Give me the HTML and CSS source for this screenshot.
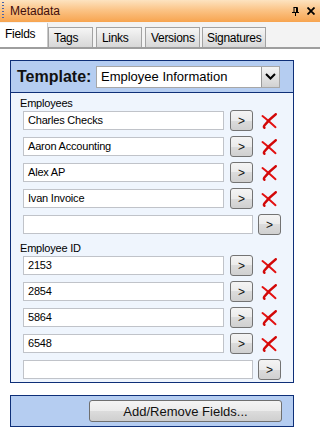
FILE: index.html
```html
<!DOCTYPE html>
<html lang="en">
<head>
    <meta charset="UTF-8">
    <meta name="viewport" content="width=device-width, initial-scale=1.0">
    <title>Metadata</title>
    <link rel="stylesheet" href="styles.css">
</head>
<body>
    <div class="titlebar">
        <span class="grip"></span>
        <span class="title">Metadata</span>
        <span class="tools">
            <svg class="pin" width="7" height="9" viewBox="0 0 7 9">
                <path d="M1.5 0.5h4M2 0.5v5M4.5 0.5v5M5.5 0.5v5M0 5.5h7M3.5 5.5v3.5" stroke="#000" stroke-width="1" fill="none"/>
            </svg>
            <svg class="close" width="8" height="8" viewBox="0 0 8 8">
                <path d="M0.5 0.5l7 7M7.5 0.5l-7 7" stroke="#000" stroke-width="1.8" fill="none"/>
            </svg>
        </span>
    </div>

    <div class="tabs">
        <div class="tab active">Fields</div>
        <div class="tab">Tags</div>
        <div class="tab">Links</div>
        <div class="tab">Versions</div>
        <div class="tab">Signatures</div>
    </div>

    <div class="panel">
        <div class="panel-head">
            <span class="template-label">Template:</span>
            <div class="combo">
                <span class="combo-text">Employee Information</span>
                <span class="combo-btn">
                    <svg width="11" height="7" viewBox="0 0 11 7">
                        <path d="M1 1l4.5 4.5L10 1" stroke="#000" stroke-width="2" fill="none"/>
                    </svg>
                </span>
            </div>
        </div>

        <div class="panel-body">
            <div class="section">
                <div class="section-label">Employees</div>
                <div class="row"><div class="field">Charles Checks</div><button class="go">&gt;</button><span class="del"></span></div>
                <div class="row"><div class="field">Aaron Accounting</div><button class="go">&gt;</button><span class="del"></span></div>
                <div class="row"><div class="field">Alex AP</div><button class="go">&gt;</button><span class="del"></span></div>
                <div class="row"><div class="field">Ivan Invoice</div><button class="go">&gt;</button><span class="del"></span></div>
                <div class="row"><div class="field wide"></div><button class="go next">&gt;</button></div>
            </div>
            <div class="section">
                <div class="section-label">Employee ID</div>
                <div class="row"><div class="field">2153</div><button class="go">&gt;</button><span class="del"></span></div>
                <div class="row"><div class="field">2854</div><button class="go">&gt;</button><span class="del"></span></div>
                <div class="row"><div class="field">5864</div><button class="go">&gt;</button><span class="del"></span></div>
                <div class="row"><div class="field">6548</div><button class="go">&gt;</button><span class="del"></span></div>
                <div class="row"><div class="field wide"></div><button class="go next">&gt;</button></div>
            </div>
        </div>
    </div>

    <div class="footer">
        <button class="add-btn">Add/Remove Fields...</button>
    </div>

    <script>
        // same red cross in every delete slot
        var cross = '<svg width="16" height="16" viewBox="0 0 16 16">' +
            '<path d="M1.5 3C5 5.5 9.5 10 14.5 14.2" stroke="#e31010" stroke-width="2" stroke-linecap="round" fill="none"/>' +
            '<path d="M14.8 1.2C10.5 4.5 6.5 8.5 3.6 12.2C2.8 13.2 2.6 14.3 3.4 14.8" stroke="#d20808" stroke-width="2.4" stroke-linecap="round" fill="none"/>' +
            '</svg>';
        document.querySelectorAll('.del').forEach(function (el) {
            el.innerHTML = cross;
        });
    </script>
</body>
</html>
```

FILE: styles.css
```css
body {
    margin: 0;
    width: 320px;
    height: 431px;
    background: #fff;
    font-family: "Liberation Sans", Arial, sans-serif;
    font-size: 11px;
    color: #000;
    overflow: hidden;
}

.titlebar {
    height: 22px;
    display: flex;
    align-items: center;
    background: linear-gradient(#fde3c0, #fbc487 45%, #f7a44f);
}

.grip {
    width: 2px;
    height: 18px;
    margin-left: 2px;
    background: repeating-linear-gradient(#4a63a8 0 1px, transparent 1px 3px);
}

.title {
    margin-left: 6px;
    font-size: 12px;
    color: #3f0d0d;
}

.tools {
    margin-left: auto;
    margin-right: 5px;
    display: flex;
    align-items: center;
    gap: 8px;
}

.tabs {
    height: 25px;
    display: flex;
    align-items: flex-end;
    background: #f3f3f3;
    border-bottom: 2px solid #9e9e9e;
}

.tab {
    box-sizing: border-box;
    height: 20px;
    line-height: 20px;
    padding-left: 5px;
    margin-right: 3px;
    font-size: 12px;
    letter-spacing: -0.3px;
    white-space: nowrap;
    border: 1px solid #a2a2a2;
    border-bottom: none;
    background: linear-gradient(#f6f6f6, #e6e6e6 50%, #d8d8d8);
}

.tab:nth-child(2) { width: 45px; }
.tab:nth-child(3) { width: 46px; }
.tab:nth-child(4) { width: 55px; margin-right: 2px; }
.tab:nth-child(5) { width: 64px; padding-left: 4px; }

.tab.active {
    width: 48px;
    height: 24px;
    line-height: 22px;
    margin-right: 0;
    border: none;
    border-right: 1px solid #c8c8c8;
    background: #fff;
}

.panel {
    margin: 11px 0 0 10px;
    width: 284px;
    box-sizing: border-box;
    border: 1px solid #0e2f78;
    background: #eff5fd;
}

.panel-head {
    height: 31px;
    display: flex;
    align-items: center;
    padding-left: 6px;
    background: #b5cdf1;
    border-bottom: 1px solid #0e2f78;
}

.template-label {
    font-size: 16px;
    font-weight: bold;
    color: #111;
}

.combo {
    margin-left: auto;
    margin-right: 13px;
    width: 184px;
    height: 22px;
    box-sizing: border-box;
    display: flex;
    align-items: center;
    background: #fff;
    border: 1px solid #a7a7a7;
}

.combo-text {
    padding-left: 4px;
    font-size: 13px;
}

.combo-btn {
    margin-left: auto;
    width: 18px;
    height: 20px;
    box-sizing: border-box;
    display: flex;
    align-items: center;
    justify-content: center;
    border-left: 1px solid #9a9a9a;
    background: linear-gradient(#f4f4f4, #e2e2e2 50%, #d2d2d2);
}

.panel-body {
    padding: 3px 0 2px 0;
}

.section + .section {
    margin-top: 6px;
}

.section-label {
    height: 14px;
    line-height: 14px;
    padding-left: 9px;
    letter-spacing: -0.2px;
}

.row {
    height: 21px;
    margin-bottom: 5px;
    padding-left: 12px;
    display: flex;
    align-items: center;
}

.row:last-child {
    margin-bottom: 0;
}

.field {
    width: 201px;
    height: 19px;
    box-sizing: border-box;
    line-height: 17px;
    padding-left: 4px;
    letter-spacing: -0.2px;
    background: #fff;
    border: 1px solid #c0c3c9;
}

.field.wide {
    width: 230px;
}

.go {
    margin-left: 6px;
    width: 23px;
    height: 21px;
    padding: 0;
    font-family: "Liberation Sans", Arial, sans-serif;
    font-size: 12px;
    color: #111;
    border: 1px solid #737373;
    border-radius: 3px;
    background: linear-gradient(#f4f4f4, #ebebeb 50%, #dcdcdc 50%, #d0d0d0);
}

.go.next {
    margin-left: 5px;
}

.del {
    margin-left: 8px;
    width: 16px;
    height: 16px;
}

.footer {
    margin: 12px 0 0 10px;
    width: 284px;
    box-sizing: border-box;
    display: flex;
    justify-content: flex-end;
    padding: 4px 11px 4px 0;
    background: #b5cdf1;
    border: 1px solid #0e2f78;
}

.add-btn {
    width: 193px;
    height: 22px;
    padding: 0;
    font-family: "Liberation Sans", Arial, sans-serif;
    font-size: 13px;
    color: #111;
    border: 1px solid #6f6f6f;
    border-radius: 3px;
    background: linear-gradient(#f4f4f4, #ebebeb 50%, #dcdcdc 50%, #cfcfcf);
}
```
